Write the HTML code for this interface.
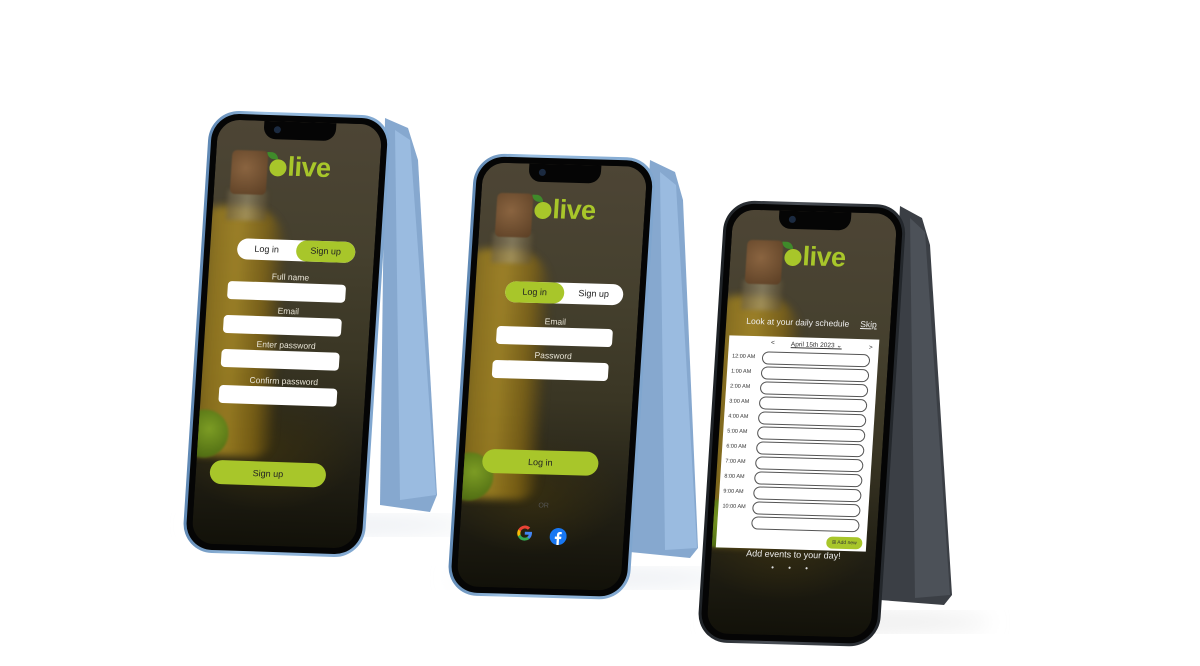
<!DOCTYPE html>
<html><head><meta charset="utf-8"><style>
*{margin:0;padding:0;box-sizing:border-box}
body{width:1200px;height:666px;background:#fff;position:relative;overflow:hidden;font-family:"Liberation Sans",sans-serif}
svg.bg{position:absolute;left:0;top:0}
.ph{position:absolute;left:0;top:0;width:182px;height:442px;transform-origin:0 0;border-radius:30px;padding:3px}
.blue{background:linear-gradient(90deg,#5f88b4,#9cc0e2 30%,#7fa6cf)}
.dark{background:linear-gradient(90deg,#1e2226,#4a4f56 40%,#23272c)}
.bez{width:100%;height:100%;background:#050505;border-radius:27px;padding:6px}
.scr{position:relative;width:100%;height:100%;border-radius:22px;overflow:hidden;
background:
radial-gradient(ellipse 90px 60px at 70px 330px,rgba(60,50,15,.7),transparent),
linear-gradient(180deg,#4d4535 0,#45402e 30%,#3a3624 55%,#222015 80%,#121109 100%)}
.bottle{position:absolute;left:-20px;top:86px;width:95px;height:250px;border-radius:30px 40px 20px 20px;
background:linear-gradient(90deg,rgba(120,100,30,.4) 0,#a8861c 25%,#c09c26 50%,#8e6e14 80%,rgba(80,60,10,.3) 100%);opacity:.7;filter:blur(4px)}
.neck{position:absolute;left:14px;top:70px;width:40px;height:30px;background:linear-gradient(90deg,#6a5e44,#a89c78,#5a4e34);opacity:.6;filter:blur(2px)}
.cork{position:absolute;left:16px;top:30px;width:36px;height:44px;border-radius:5px;background:radial-gradient(circle at 40% 40%,#8a6440,#5a3e24);filter:blur(.5px)}
.lime{position:absolute;left:-18px;top:290px;width:48px;height:48px;border-radius:50%;background:radial-gradient(circle at 60% 40%,#7c9c24,#3e5a0c);filter:blur(1px)}
.notch{position:absolute;left:50%;top:0;width:72px;height:18px;margin-left:-36px;background:#050505;border-radius:0 0 12px 12px;z-index:2}
.notch:after{content:"";position:absolute;left:10px;top:5px;width:7px;height:7px;border-radius:50%;background:#1b2a40}
.logo{position:absolute;top:30px;left:54px;font-weight:bold;font-size:27px;color:#a8c62a;letter-spacing:-.5px}
.logo i{display:inline-block;width:17px;height:17px;border-radius:50%;background:#a8c62a;vertical-align:-1px;margin-right:1px;position:relative}
.logo i:before{content:"";position:absolute;left:-3px;top:-7px;width:11px;height:7px;background:#3f8a2a;border-radius:0 8px 0 8px}
.tog{position:absolute;height:21px;width:118px;border-radius:11px;background:#fff;font-size:9px;color:#222;display:flex}
.tog div{flex:1;text-align:center;line-height:21px;border-radius:11px}
.g{background:#a8c62a}
.lab{position:absolute;width:100%;text-align:center;font-size:8.5px;color:#e8e4d6}
.fld{position:absolute;height:18px;background:#fff;border-radius:4px}
.btn{position:absolute;height:24px;border-radius:12px;background:#a8c62a;font-size:9px;color:#222;text-align:center;line-height:24px}
.card{position:absolute;background:#fff;width:150px;height:212px;left:4px;top:126px;font-size:5.5px;color:#333}
.row{position:absolute;left:0;width:100%;height:15px}
.row span{position:absolute;left:4px;top:4px}
.row b{position:absolute;left:34px;right:8px;top:1px;height:13px;border:1.3px solid #555;border-radius:7px;font-weight:normal}
</style></head><body>
<svg class="bg" width="1200" height="666">
<defs><filter id="bl"><feGaussianBlur stdDeviation="10"/></filter></defs>
<ellipse cx="330" cy="525" rx="140" ry="10" fill="#eceff3" filter="url(#bl)"/>
<ellipse cx="590" cy="578" rx="140" ry="10" fill="#eceff3" filter="url(#bl)"/>
<ellipse cx="850" cy="622" rx="140" ry="10" fill="#ececec" filter="url(#bl)"/>
<polygon points="385,118 408,128 418,160 437,495 430,512 380,505" fill="#86a8cf"/>
<polygon points="395,130 410,140 436,495 400,500" fill="#9abbe0"/>
<polygon points="650,160 675,172 683,200 698,548 690,558 630,552" fill="#86a8cf"/>
<polygon points="660,172 676,185 697,548 665,550" fill="#9abbe0"/>
<polygon points="900,206 922,218 930,245 952,595 944,605 880,600" fill="#3b3f45"/>
<polygon points="910,218 925,232 950,595 915,598" fill="#4c5158"/>
</svg>

<!-- Phone 1 -->
<div class="ph blue" style="transform:matrix(1,0.033,-0.064,1,210,110)"><div class="bez"><div class="scr">
<div class="bottle"></div><div class="neck"></div><div class="cork"></div><div class="lime"></div>
<div class="notch"></div>
<div class="logo"><i></i>live</div>
<div class="tog" style="left:27px;top:118px"><div>Log in</div><div class="g">Sign up</div></div>
<div class="lab" style="top:150px">Full name</div>
<div class="fld" style="left:20px;width:118px;top:161px"></div>
<div class="lab" style="top:184px">Email</div>
<div class="fld" style="left:18px;width:118px;top:195px"></div>
<div class="lab" style="top:218px">Enter password</div>
<div class="fld" style="left:18px;width:118px;top:229px"></div>
<div class="lab" style="top:254px">Confirm password</div>
<div class="fld" style="left:18px;width:118px;top:265px"></div>
<div class="btn" style="left:14px;width:116px;top:340px">Sign up</div>
</div></div></div>

<!-- Phone 2 -->
<div class="ph blue" style="transform:matrix(1,0.028,-0.064,1,475,153)"><div class="bez"><div class="scr">
<div class="bottle"></div><div class="neck"></div><div class="cork"></div><div class="lime"></div>
<div class="notch"></div>
<div class="logo"><i></i>live</div>
<div class="tog" style="left:30px;top:118px"><div class="g">Log in</div><div>Sign up</div></div>
<div class="lab" style="top:152px">Email</div>
<div class="fld" style="left:24px;width:116px;top:163px"></div>
<div class="lab" style="top:186px">Password</div>
<div class="fld" style="left:22px;width:116px;top:197px"></div>
<div class="btn" style="left:18px;width:116px;top:286px">Log in</div>
<div class="lab" style="top:338px;color:#555;font-size:7px">OR</div>
<svg style="position:absolute;left:56px;top:360px" width="18" height="18" viewBox="0 0 24 24"><path d="M21.6 12.2c0-.7-.1-1.4-.2-2H12v3.9h5.4a4.6 4.6 0 0 1-2 3v2.5h3.2c1.9-1.7 3-4.3 3-7.4z" fill="#4285F4"/><path d="M12 22c2.7 0 5-.9 6.6-2.4l-3.2-2.5c-.9.6-2 1-3.4 1-2.6 0-4.8-1.8-5.6-4.1H3.1v2.6A10 10 0 0 0 12 22z" fill="#34A853"/><path d="M6.4 14c-.2-.6-.3-1.3-.3-2s.1-1.4.3-2V7.4H3.1a10 10 0 0 0 0 9.2z" fill="#FBBC05"/><path d="M12 5.9c1.5 0 2.8.5 3.8 1.5l2.9-2.9A10 10 0 0 0 3.1 7.4L6.4 10c.8-2.4 3-4.1 5.6-4.1z" fill="#EA4335"/></svg>
<svg style="position:absolute;left:90px;top:363px" width="17" height="17" viewBox="0 0 24 24"><circle cx="12" cy="12" r="12" fill="#1877F2"/><path d="M13.5 24v-8.5h2.8l.4-3.3h-3.2v-2c0-.9.3-1.6 1.6-1.6h1.7V5.7c-.3 0-1.3-.1-2.5-.1-2.5 0-4.1 1.5-4.1 4.2v2.4H7.4v3.3h2.8V24z" fill="#fff"/></svg>
</div></div></div>

<!-- Phone 3 -->
<div class="ph dark" style="transform:matrix(1,0.028,-0.064,1,725,200)"><div class="bez"><div class="scr">
<div class="bottle"></div><div class="neck"></div><div class="cork"></div><div class="lime"></div>
<div class="notch"></div>
<div class="logo"><i></i>live</div>
<div style="position:absolute;top:106px;left:20px;font-size:8.5px;color:#eee">Look at your daily schedule</div>
<div style="position:absolute;top:106px;left:134px;font-size:8.5px;color:#eee;text-decoration:underline">Skip</div>
<div class="card">
<div style="position:absolute;left:42px;top:3px;font-size:6.5px">&lt;</div>
<div style="position:absolute;left:62px;top:3px;font-size:6.5px;text-decoration:underline">April 15th 2023 ⌄</div>
<div style="position:absolute;left:140px;top:5px;font-size:6.5px">&gt;</div>
<div class="row" style="top:14px"><span>12:00 AM</span><b></b></div>
<div class="row" style="top:29px"><span>1:00 AM</span><b></b></div>
<div class="row" style="top:44px"><span>2:00 AM</span><b></b></div>
<div class="row" style="top:59px"><span>3:00 AM</span><b></b></div>
<div class="row" style="top:74px"><span>4:00 AM</span><b></b></div>
<div class="row" style="top:89px"><span>5:00 AM</span><b></b></div>
<div class="row" style="top:104px"><span>6:00 AM</span><b></b></div>
<div class="row" style="top:119px"><span>7:00 AM</span><b></b></div>
<div class="row" style="top:134px"><span>8:00 AM</span><b></b></div>
<div class="row" style="top:149px"><span>9:00 AM</span><b></b></div>
<div class="row" style="top:164px"><span>10:00 AM</span><b></b></div>
<div class="row" style="top:179px"><b></b></div>
<div style="position:absolute;right:4px;top:198px;width:36px;height:12px;border-radius:6px;background:#a8c62a;font-size:5px;line-height:12px;text-align:center">⊞ Add new</div>
</div>
<div style="position:absolute;top:338px;width:100%;text-align:center;font-size:9px;color:#eee">Add events to your day!</div>
<div style="position:absolute;top:352px;width:100%;text-align:center;font-size:8px;color:#ddd;letter-spacing:6px">• • •</div>
</div></div></div>
</body></html>
